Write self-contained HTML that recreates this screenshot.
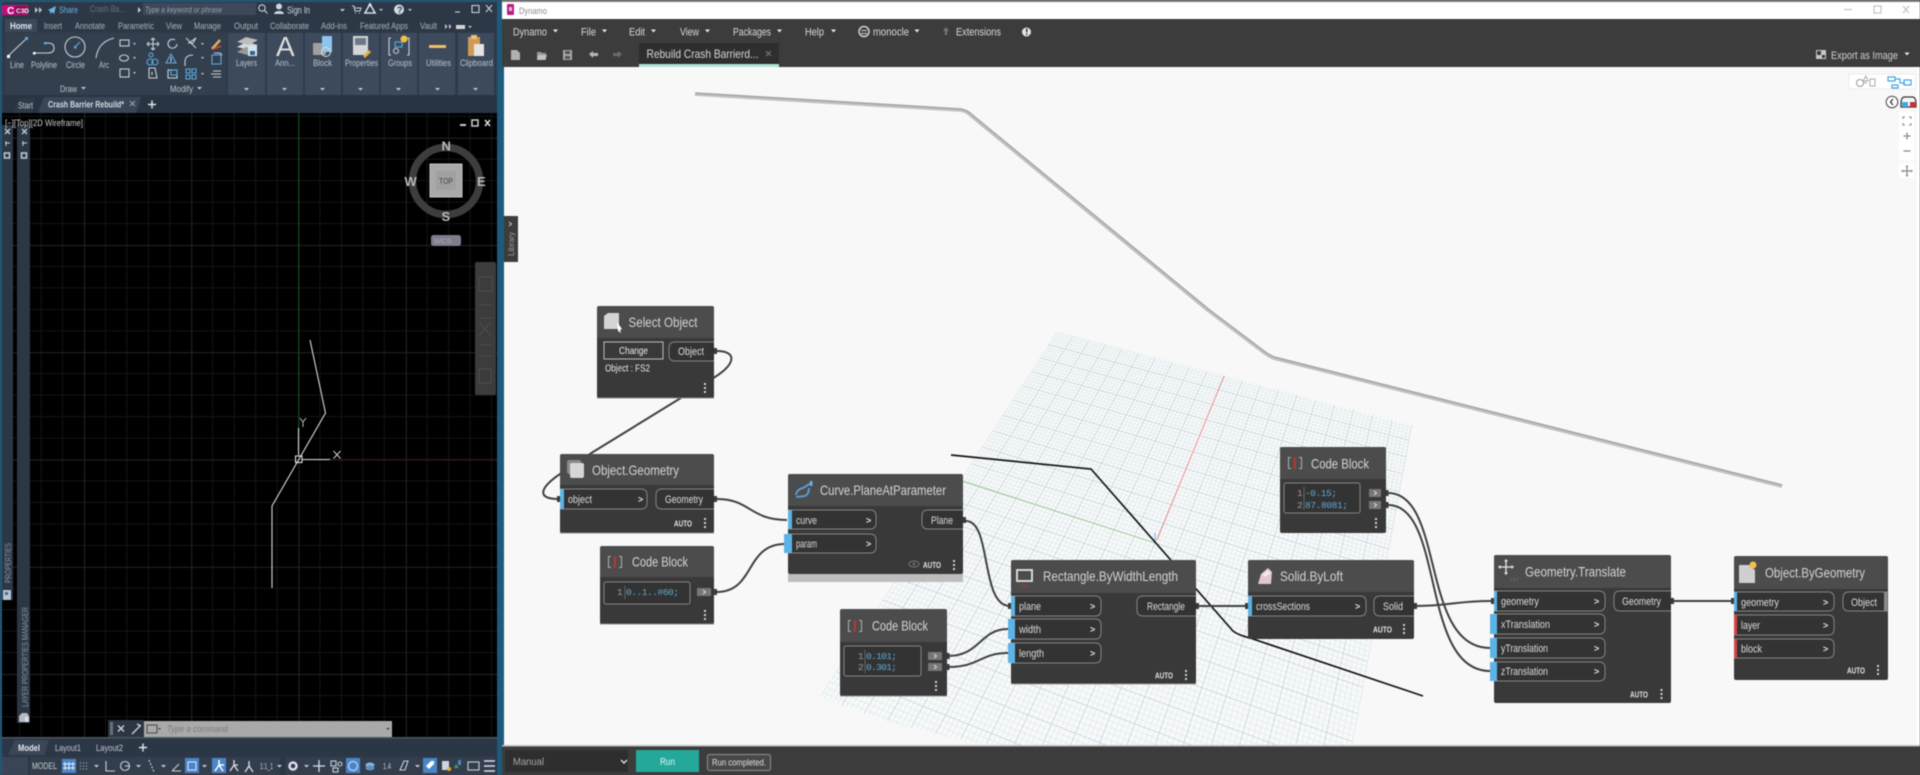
<!DOCTYPE html>
<html><head><meta charset="utf-8"><title>Dynamo</title>
<style>
html,body{margin:0;padding:0;width:1920px;height:775px;overflow:hidden;background:#3c3c3c}
svg{display:block;filter:blur(.5px)}
text{font-family:"Liberation Sans",sans-serif}
.l{fill:#bcc4cd;font-size:9px}
.t{fill:#aab3bd;font-size:9px}
.m{fill:#d8d8d8;font-size:11px}
.h{fill:#d4d4d4;font-size:14px}
.p{fill:#dcdcdc;font-size:11px}
.a{fill:#e4e4e4;font-size:8.5px;font-weight:bold}
.c{font-family:"Liberation Mono",monospace;font-size:9.5px;fill:#5ba9d6}
.n{font-family:"Liberation Mono",monospace;font-size:9.5px;fill:#999}
.g{fill:none;stroke:#404040;stroke-width:2}
.i{fill:none;stroke:#c8cfd7;stroke-width:1.1}
.b{fill:none;stroke:#5aa9e0;stroke-width:1.1}
.pl{fill:#333;stroke:#858585;stroke-width:1}
.chev{fill:#e0e0e0;font-size:9px;font-weight:bold}
.w{fill:#d0d0d0;font-size:8px}
</style></head><body>
<svg xmlns="http://www.w3.org/2000/svg" width="1920" height="775" viewBox="0 0 1920 775">
<defs>
<pattern id="cad" patternUnits="userSpaceOnUse" x="298.5" y="459.5" width="107.25" height="107.25">
<path d="M21.45 0V107.25M42.9 0V107.25M64.35 0V107.25M85.8 0V107.25M0 21.45H107.25M0 42.9H107.25M0 64.35H107.25M0 85.8H107.25" stroke="#141414" stroke-width="1" fill="none"/>
<path d="M.5 0V107.25M0 .5H107.25" stroke="#252525" stroke-width="1" fill="none"/>
</pattern>
<clipPath id="plane"><path d="M1057 332L1412 425L1352 746H997Q900 730 820 697Z"/></clipPath>
<g id="dots"><circle cx="0" cy="-4" r="1.1" fill="#ddd"/><circle cx="0" cy="0" r="1.1" fill="#ddd"/><circle cx="0" cy="4" r="1.1" fill="#ddd"/></g>
<g id="cb"><path d="M3 1.500H.5V12.500H3M11 1.500H13.500V12.500H11" fill="none" stroke="#aaa" stroke-width="1.100"/><rect x="5.500" y="1" width="2.500" height="12" fill="#a83a3a"/></g>
</defs>

<!-- AutoCAD window -->
<rect x="0" y="0" width="504" height="775" fill="#1d5a7c"/>
<rect x="2" y="2" width="495" height="15" fill="#2d3847"/>
<rect x="2" y="17" width="495" height="15" fill="#2d3847"/>
<rect x="2" y="32" width="495" height="63" fill="#2f3a49"/>
<rect x="2" y="95" width="495" height="18" fill="#293443"/>
<rect x="2" y="113" width="495" height="624" fill="#000"/>
<rect x="2" y="113" width="495" height="624" fill="url(#cad)"/>
<!-- title bar -->
<rect x="2" y="5" width="26" height="10" fill="#c20e7c" rx="1"/>
<text x="7" y="14" fill="#fff" font-size="10" font-weight="bold">C</text>
<rect x="15" y="6" width="12" height="8" fill="#8a0a58"/>
<text x="16" y="13" fill="#fff" font-size="6.5" font-weight="bold">C3D</text>
<path d="M35 7l3 3-3 3zM39 7l3 3-3 3z" fill="#c5ccd4"/>
<path d="M48 10l8-4-2 8-2-2-2 2v-3z" fill="#6ab4ea"/>
<text x="59" y="13" fill="#6ab0e0" font-size="9.5" textLength="19" lengthAdjust="spacingAndGlyphs">Share</text>
<text x="90" y="12" fill="#64707e" font-size="9.5" textLength="35" lengthAdjust="spacingAndGlyphs">Crash Ba...</text>
<path d="M138 7l3 3-3 3z" fill="#c5ccd4"/>
<rect x="143" y="3" width="113" height="12" fill="#3d4959"/>
<text x="145" y="12.5" fill="#98a1ab" font-size="8.5" font-style="italic" textLength="77" lengthAdjust="spacingAndGlyphs">Type a keyword or phrase</text>
<circle cx="262" cy="8" r="3.2" class="i"/><path d="M264.5 10.5l3 3" class="i"/>
<circle cx="279" cy="6.5" r="3" fill="#cfd5dc"/><path d="M274 14c0-4 10-4 10 0z" fill="#cfd5dc"/>
<text x="287" y="13.5" fill="#cfd5dc" font-size="10" textLength="23" lengthAdjust="spacingAndGlyphs">Sign In</text>
<path d="M340 9h5l-2.500 2.500z" fill="#c5ccd4"/>
<path d="M352 6h2l1 5h5l1-3h-6M355 13h1M359 13h1" class="i"/>
<path d="M370 4l5 9h-10z" fill="none" stroke="#d5dbe2" stroke-width="1.6"/><circle cx="370" cy="5" r="1.6" fill="#d5dbe2"/>
<path d="M379 9h4l-2 2z" fill="#c5ccd4"/>
<circle cx="399" cy="9.500" r="5" fill="#d5dbe2"/><text x="397" y="13" fill="#2d3847" font-size="9" font-weight="bold">?</text>
<path d="M408 9h4l-2 2z" fill="#c5ccd4"/>
<path d="M455 12h5" class="i" stroke-width="1.600"/><rect x="472" y="5.500" width="7" height="7" class="i"/><path d="M486 5l6 7M492 5l-6 7" class="i" stroke-width="1.500"/>
<!-- ribbon tabs -->
<path d="M5 32V19h32v13z" fill="#3b4859"/>
<text class="t" x="10" y="29" style="fill:#e4e8ed;font-weight:bold" textLength="22" lengthAdjust="spacingAndGlyphs">Home</text>
<text class="t" x="44" y="29" textLength="18" lengthAdjust="spacingAndGlyphs">Insert</text>
<text class="t" x="75" y="29" textLength="30" lengthAdjust="spacingAndGlyphs">Annotate</text>
<text class="t" x="118" y="29" textLength="36" lengthAdjust="spacingAndGlyphs">Parametric</text>
<text class="t" x="166" y="29" textLength="16" lengthAdjust="spacingAndGlyphs">View</text>
<text class="t" x="194" y="29" textLength="27" lengthAdjust="spacingAndGlyphs">Manage</text>
<text class="t" x="234" y="29" textLength="24" lengthAdjust="spacingAndGlyphs">Output</text>
<text class="t" x="270" y="29" textLength="39" lengthAdjust="spacingAndGlyphs">Collaborate</text>
<text class="t" x="321" y="29" textLength="26" lengthAdjust="spacingAndGlyphs">Add-ins</text>
<text class="t" x="360" y="29" textLength="48" lengthAdjust="spacingAndGlyphs">Featured Apps</text>
<text class="t" x="420" y="29" textLength="17" lengthAdjust="spacingAndGlyphs">Vault</text>
<path d="M445 24l2.500 2.500-2.500 2.500zM449 24l2.500 2.500-2.500 2.500z" fill="#c5ccd4"/><rect x="456" y="25" width="9" height="4" fill="#d5d5d5"/><path d="M468 26h4l-2 2z" fill="#c5ccd4"/>
<!-- ribbon panels -->
<rect x="5" y="33" width="221" height="62" fill="#343f4e"/>
<rect x="228" y="33" width="37" height="62" fill="#3d4a5c"/><rect x="267" y="33" width="36" height="62" fill="#3d4a5c"/><rect x="305" y="33" width="36" height="62" fill="#3d4a5c"/><rect x="343" y="33" width="36" height="62" fill="#3d4a5c"/><rect x="381" y="33" width="36" height="62" fill="#3d4a5c"/><rect x="419" y="33" width="36" height="62" fill="#3d4a5c"/><rect x="458" y="33" width="36" height="62" fill="#3d4a5c"/>
<g fill="#c5ccd4"><path d="M244 88h5l-2.500 2.500zM282 88h5l-2.500 2.500zM320 88h5l-2.500 2.500zM358 88h5l-2.500 2.500zM396 88h5l-2.500 2.500zM435 88h5l-2.500 2.500zM473 88h5l-2.500 2.500z"/></g>
<!-- draw -->
<path d="M8 56L26 39" class="i"/><rect x="7" y="55" width="3" height="3" fill="#fff"/><rect x="25" y="37" width="3" height="3" fill="#5aa9e0"/>
<path d="M34 53h14q6 0 6-5t-6-5h-3" class="i"/><rect x="33" y="52" width="2.500" height="2.500" fill="#fff"/><rect x="44" y="42" width="2.500" height="2.500" fill="#5aa9e0"/>
<circle cx="75" cy="47" r="10" class="i"/><path d="M75 47l5-5" class="b"/><rect x="74" y="46" width="2.500" height="2.500" fill="#5aa9e0"/>
<path d="M96 58Q98 42 114 38" class="i"/>
<rect x="120" y="40" width="9" height="6" class="i"/><path d="M133 43h3l-1.500 2z" fill="#c5ccd4"/>
<ellipse cx="124" cy="58" rx="4.500" ry="3" class="i"/><path d="M133 57h3l-1.500 2z" fill="#c5ccd4"/>
<rect x="120" y="69" width="9" height="8" class="i"/><path d="M133 72h3l-1.500 2z" fill="#c5ccd4"/>
<text class="l" x="10" y="68" textLength="14" lengthAdjust="spacingAndGlyphs">Line</text>
<text class="l" x="31" y="68" textLength="26" lengthAdjust="spacingAndGlyphs">Polyline</text>
<text class="l" x="66" y="68" textLength="19" lengthAdjust="spacingAndGlyphs">Circle</text>
<text class="l" x="99" y="68" textLength="10" lengthAdjust="spacingAndGlyphs">Arc</text>
<text class="l" x="60" y="92" textLength="17" lengthAdjust="spacingAndGlyphs">Draw</text><path d="M81 87h5l-2.500 2.500z" fill="#c5ccd4"/>
<text class="l" x="170" y="92" textLength="23" lengthAdjust="spacingAndGlyphs">Modify</text><path d="M197 87h5l-2.500 2.500z" fill="#c5ccd4"/>
<!-- modify -->
<path d="M153 38v12M147 44h12M153 38l-2 2M153 38l2 2M153 50l-2-2M153 50l2-2M147 44l2-2M147 44l2 2M159 44l-2-2M159 44l-2 2" class="i"/>
<path d="M177 44a4.500 4.500 0 1 1-2-4" class="i"/>
<path d="M186 38l10 10M196 38l-3 5-4 0z" class="i"/><path d="M201 43h3l-1.500 2z" fill="#c5ccd4"/>
<path d="M212 49l8-9" stroke="#e0b060" stroke-width="2.500"/><path d="M213 49l8-3" stroke="#d04a4a" stroke-width="1.500"/>
<circle cx="151" cy="55" r="2" class="b"/><circle cx="155" cy="62" r="3" class="b"/><circle cx="150" cy="62" r="3" class="b"/>
<path d="M171 54l-5 9h10z" class="b"/><path d="M171 57v5" class="i"/>
<path d="M185 66v-4q0-7 8-7" class="i"/><path d="M201 57h3l-1.500 2z" fill="#c5ccd4"/>
<rect x="212" y="55" width="9" height="9" class="b"/><path d="M214 53h6l2 2" class="i"/>
<path d="M149 68h6l2 10h-8zM152 72v3" class="i"/>
<rect x="168" y="70" width="9" height="8" class="i"/><rect x="171" y="70" width="6" height="5" class="b"/>
<path d="M186 69h4v4h-4zM192 69h4v4h-4zM186 75h4v4h-4zM192 75h4v4h-4z" class="b"/><path d="M201 73h3l-1.500 2z" fill="#c5ccd4"/>
<path d="M213 71h8M211 74h10M213 77h8" class="i"/>
<!-- big icons -->
<path d="M237 47l9-5 12 3-9 5z" fill="#d8d8d8"/><path d="M237 42l9-5 12 3-9 5z" fill="#bdbdbd"/><path d="M237 52l9-5 8 2-7 6z" fill="#9a9a9a"/><rect x="248" y="46" width="9" height="10" fill="#cfe6f6"/><rect x="250" y="51" width="5" height="4" fill="#3a5f88"/>
<text x="276" y="56" fill="#dcdcdc" font-size="28">A</text>
<rect x="313" y="43" width="13" height="12" fill="#a0a0a0"/><rect x="322" y="36" width="10" height="16" fill="#8fc3f0"/><circle cx="326" cy="52" r="4.500" fill="none" stroke="#ddd"/>
<rect x="353" y="36" width="15" height="19" fill="#d5d5d5"/><rect x="355" y="38" width="11" height="7" fill="#6a7a8a"/><path d="M364 57l6-6" stroke="#e0b040" stroke-width="3"/>
<path d="M391 38h-2v17h2M407 38h2v17h-2" class="i"/><rect x="395" y="42" width="7" height="5" class="b"/><circle cx="396" cy="51" r="2.500" class="i"/><circle cx="404" cy="39" r="3.500" fill="#f0c040"/>
<rect x="429" y="45" width="17" height="3" fill="#f0c060"/>
<rect x="468" y="37" width="12" height="19" fill="#d09a50"/><rect x="471" y="35" width="6" height="4" fill="#e4c080"/><rect x="474" y="44" width="10" height="12" fill="#e4e4e4"/>
<text class="l" x="236" y="66" textLength="21" lengthAdjust="spacingAndGlyphs">Layers</text>
<text class="l" x="275" y="66" textLength="20" lengthAdjust="spacingAndGlyphs">Ann...</text>
<text class="l" x="313" y="66" textLength="19" lengthAdjust="spacingAndGlyphs">Block</text>
<text class="l" x="345" y="66" textLength="33" lengthAdjust="spacingAndGlyphs">Properties</text>
<text class="l" x="388" y="66" textLength="24" lengthAdjust="spacingAndGlyphs">Groups</text>
<text class="l" x="426" y="66" textLength="25" lengthAdjust="spacingAndGlyphs">Utilities</text>
<text class="l" x="460" y="66" textLength="33" lengthAdjust="spacingAndGlyphs">Clipboard</text>
<!-- doc tabs -->
<path d="M14 113l5-15h16l-3 15z" fill="#2f3a49"/>
<text x="18" y="108.500" class="l" textLength="15" lengthAdjust="spacingAndGlyphs">Start</text>
<path d="M38 113l6-16h97l-5 16z" fill="#3a4656"/>
<text x="48" y="107.500" fill="#d5dae0" font-size="9" font-weight="bold" textLength="76" lengthAdjust="spacingAndGlyphs">Crash Barrier Rebuild*</text>
<path d="M130 101l5 5M135 101l-5 5" stroke="#9aa3ad" fill="none"/>
<path d="M148 104.500h8M152 100.500v8" stroke="#e4e4e4" stroke-width="1.400"/>
<!-- palettes -->
<rect x="2" y="125" width="11" height="475" fill="#2c3746"/>
<rect x="17" y="125" width="13" height="598" fill="#2c3746"/>
<path d="M5 129l5 5M10 129l-5 5M22 129l5 5M27 129l-5 5" stroke="#c5ccd4" stroke-width="1.300"/>
<path d="M6 141v5M5 143h5M23 141v5M22 143h5" stroke="#c5ccd4"/><rect x="4.500" y="153" width="5" height="5" fill="none" stroke="#c5ccd4" stroke-width="1.500"/><rect x="21.500" y="153" width="5" height="5" fill="none" stroke="#c5ccd4" stroke-width="1.500"/>
<text transform="translate(11 583) rotate(-90)" fill="#8c96a2" font-size="8.500" textLength="40" lengthAdjust="spacingAndGlyphs">PROPERTIES</text>
<rect x="3" y="590" width="8" height="10" fill="#b8c4d0"/><rect x="5" y="592" width="3" height="3" fill="#3a6ea0"/>
<text transform="translate(28 707) rotate(-90)" fill="#8c96a2" font-size="8.500" textLength="100" lengthAdjust="spacingAndGlyphs">LAYER PROPERTIES MANAGER</text>
<path d="M19 722v-6l3-3h5l2 3v6z" fill="#b8bcc2"/><rect x="25" y="717" width="4" height="5" fill="#dde"/>
<!-- viewport -->
<text x="5" y="126" fill="#c8c8c8" font-size="9" textLength="78" lengthAdjust="spacingAndGlyphs">[−][Top][2D Wireframe]</text>
<path d="M460 125h6" stroke="#ccc" stroke-width="2"/><rect x="472" y="120" width="6" height="6" fill="none" stroke="#ccc" stroke-width="1.500"/><path d="M485 120l5 6M490 120l-5 6" stroke="#ddd" stroke-width="1.500"/>
<path d="M298.500 113V450" stroke="#0d4a14" stroke-width="1"/>
<path d="M330 459.500H497" stroke="#450c12" stroke-width="1"/>
<!-- viewcube -->
<circle cx="446" cy="181" r="33.500" fill="none" stroke="#3d3d3d" stroke-width="7.500"/>
<rect x="430" y="164" width="32" height="33" fill="#a9a9a9" stroke="#c2c2c2"/>
<rect x="436" y="171" width="20" height="19" fill="#a0a0a0"/>
<text x="439" y="184" fill="#444" font-size="8.500" textLength="14" lengthAdjust="spacingAndGlyphs">TOP</text>
<g fill="#b9b9b9" font-size="13" font-weight="bold"><text x="441.500" y="150.500">N</text><text x="441.500" y="221">S</text><text x="404.500" y="186">W</text><text x="477" y="186">E</text></g>
<rect x="431" y="235" width="30" height="11" rx="2.500" fill="#7d7d8d"/>
<text x="434" y="243.500" fill="#a9a9b8" font-size="7.500">WCS</text>
<rect x="475" y="262" width="21" height="133" rx="2" fill="#3c3c3c"/>
<g fill="none" stroke="#4e4e4e"><rect x="479" y="277" width="13" height="14"/><path d="M480 305h11M480 318h11M479 322l12 14M491 322l-12 14M480 345h11M480 356h11"/><rect x="479" y="369" width="12" height="14"/></g>
<!-- geometry in CAD -->
<path d="M310 340L325.500 413L272 506V588" fill="none" stroke="#d8d8d8" stroke-width="1.100"/>
<path d="M298.500 428V455M302 459.500H330" stroke="#d8d8d8" stroke-width="1.100" fill="none"/>
<rect x="295.500" y="456" width="6.500" height="6.500" fill="none" stroke="#eee"/>
<path d="M300 418l3 4 3-4M303 422v5" stroke="#bbb" fill="none"/>
<path d="M333.500 451l7 7.500M340.500 451l-7 7.500" stroke="#ccc"/>
<!-- command line -->
<rect x="108" y="720" width="36" height="17" fill="#2c3544"/>
<rect x="110" y="722" width="3" height="13" fill="#6a6f78"/>
<path d="M118 725.500l6 6M124 725.500l-6 6M132 734l8-8M137 724l4 2" stroke="#cdd2d8" stroke-width="1.400" fill="none"/>
<rect x="144" y="721" width="248" height="16" fill="#a9a9a9"/>
<rect x="147" y="725" width="10" height="8" fill="none" stroke="#4a4a4a"/><path d="M158 728h3l-1.500 2z" fill="#444"/>
<text x="167" y="732" fill="#7b7b7b" font-size="9" font-style="italic" textLength="61" lengthAdjust="spacingAndGlyphs">Type  a  command</text>
<path d="M386 728h4l-2 2z" fill="#444"/>
<!-- model tabs -->
<rect x="2" y="737" width="495" height="20" fill="#2c3746"/>
<rect x="2" y="737" width="495" height="1.500" fill="#4a5564"/>
<path d="M8 755l7-15h34l-5 15z" fill="#3a4656"/>
<text x="18" y="751" fill="#e4e8ed" font-size="9" font-weight="bold" textLength="22" lengthAdjust="spacingAndGlyphs">Model</text>
<text x="55" y="751" class="l" textLength="26" lengthAdjust="spacingAndGlyphs">Layout1</text>
<text x="96" y="751" class="l" textLength="27" lengthAdjust="spacingAndGlyphs">Layout2</text>
<path d="M139 747.500h8M143 743.500v8" stroke="#e4e4e4" stroke-width="1.400"/>
<!-- status -->
<rect x="2" y="757" width="495" height="18" fill="#2b3644"/>
<rect x="2" y="757" width="26" height="18" fill="#394555"/>
<rect x="30" y="757" width="250" height="18" fill="#333e4d"/><rect x="285" y="757" width="210" height="18" fill="#333e4d"/>
<text x="32" y="769" fill="#c8cdd3" font-size="9" textLength="25" lengthAdjust="spacingAndGlyphs">MODEL</text>
<rect x="62" y="759" width="14" height="14" fill="#4a86c7"/><path d="M65 762v8M69 762v8M73 762v8M63 764h12M63 768h12" stroke="#dfeafa"/>
<path d="M80 763h9M80 766h9M80 769h9" stroke="#bcc4cd" stroke-dasharray="1 2"/>
<path d="M94 765h5l-2.500 2.500zM136 765h5l-2.500 2.500zM161 765h5l-2.500 2.500zM202 765h5l-2.500 2.500zM277 765h5l-2.500 2.500zM304 765h5l-2.500 2.500zM415 765h5l-2.500 2.500z" fill="#c5ccd4"/>
<path d="M106 761v10h9" class="i"/>
<circle cx="125" cy="766" r="4.500" class="i"/><path d="M125 766h5" class="i"/>
<path d="M149 760l5 12" class="i" stroke-dasharray="2 1.500"/>
<path d="M172 771h9M172 771l7-7" class="i"/>
<rect x="185" y="758" width="14" height="15" fill="#4a86c7"/><rect x="188" y="762" width="8" height="8" fill="none" stroke="#dfeafa"/>
<rect x="212" y="758" width="14" height="15" fill="#4a86c7"/><path d="M219 760v5l-4 6M219 765l4 6M219 765h5" stroke="#fff" stroke-width="1.500" fill="none"/>
<path d="M234 760v5l-4 6M234 765l4 6M234 765h4" stroke="#dde" stroke-width="1.300" fill="none"/>
<path d="M249 761v5l-4 6M249 766l4 6" stroke="#dde" stroke-width="1.300" fill="none"/>
<text x="260" y="769" fill="#c8cdd3" font-size="8.500" textLength="13" lengthAdjust="spacingAndGlyphs">1:1_1</text>
<circle cx="293" cy="766" r="3.500" fill="none" stroke="#dde" stroke-width="2.500"/>
<path d="M313 766h12M319 760v12" stroke="#dde" stroke-width="1.300"/>
<rect x="331" y="761" width="5" height="5" class="i"/><circle cx="340" cy="764" r="2" class="i"/><rect x="333" y="768" width="5" height="4" class="i"/>
<rect x="346" y="758" width="14" height="15" fill="#4a86c7"/><circle cx="353" cy="766" r="4.500" fill="none" stroke="#dfeafa"/>
<ellipse cx="370" cy="765" rx="4.500" ry="2.500" fill="#7fb6e6"/><ellipse cx="370" cy="768" rx="4.500" ry="2.500" fill="#5f8fc0"/>
<text x="383" y="769" fill="#c8cdd3" font-size="8.500" textLength="8" lengthAdjust="spacingAndGlyphs">1.4</text>
<path d="M400 770l4-9h4l-3 9z" class="i"/>
<rect x="423" y="758" width="14" height="15" fill="#4a86c7"/><path d="M426 766l5-5h3v3l-5 5z" fill="#fff"/>
<rect x="442" y="761" width="7" height="9" fill="#cfd5dc"/><circle cx="449" cy="769" r="2" fill="#e0b040"/><path d="M454 768l2-4 3 4z" fill="#4a9a50"/><rect x="458" y="760" width="3" height="5" fill="#4a86c7"/>
<rect x="468" y="762" width="11" height="8" class="i"/>
<path d="M484 761h11M484 766h11M484 771h11" stroke="#dde" stroke-width="1.400"/>

<!-- Dynamo window -->
<rect x="502" y="0" width="1418" height="2" fill="#7d7d7d"/>
<rect x="502" y="2" width="1418" height="17" fill="#fff"/>
<rect x="507" y="4" width="7" height="11" rx="1" fill="#b81e80"/><rect x="509" y="7" width="3" height="4" fill="#e8b8d8"/>
<text x="519" y="14" fill="#8c8c8c" font-size="9.500" textLength="28" lengthAdjust="spacingAndGlyphs">Dynamo</text>
<path d="M1844 9.500h8" stroke="#bbb"/><rect x="1874" y="6" width="7" height="7" fill="none" stroke="#bbb"/><path d="M1903 6l6 7M1909 6l-6 7" stroke="#bbb" fill="none"/>
<rect x="502" y="19" width="1418" height="48" fill="#3c3c3c"/>
<text class="m" x="513" y="35.500" textLength="34" lengthAdjust="spacingAndGlyphs">Dynamo</text>
<text class="m" x="581" y="35.500" textLength="15" lengthAdjust="spacingAndGlyphs">File</text>
<text class="m" x="629" y="35.500" textLength="16" lengthAdjust="spacingAndGlyphs">Edit</text>
<text class="m" x="680" y="35.500" textLength="19" lengthAdjust="spacingAndGlyphs">View</text>
<text class="m" x="733" y="35.500" textLength="38" lengthAdjust="spacingAndGlyphs">Packages</text>
<text class="m" x="805" y="35.500" textLength="19" lengthAdjust="spacingAndGlyphs">Help</text>
<text class="m" x="873" y="35.500" textLength="36" lengthAdjust="spacingAndGlyphs">monocle</text>
<text class="m" x="956" y="35.500" textLength="45" lengthAdjust="spacingAndGlyphs">Extensions</text>
<path d="M553 29.500h5l-2.500 3zM602 29.500h5l-2.500 3zM651 29.500h5l-2.500 3zM705 29.500h5l-2.500 3zM777 29.500h5l-2.500 3zM831 29.500h5l-2.500 3zM914.500 29.500h5l-2.500 3z" fill="#e8e8e8"/>
<circle cx="864" cy="31.500" r="5" fill="none" stroke="#cfcfcf" stroke-width="1.500"/><path d="M861 30.500h6M861 33.500h6" stroke="#cfcfcf"/>
<path d="M946 27l3 4h-2v4h-2v-4h-2z" fill="#777"/>
<circle cx="1026.500" cy="32" r="4.500" fill="#e4e4e4"/><rect x="1026" y="28.500" width="1.500" height="4" fill="#3c3c3c"/><rect x="1026" y="33.500" width="1.500" height="1.500" fill="#3c3c3c"/>
<!-- toolbar -->
<path d="M511 50h6l3 3v7h-9z" fill="#b0b0b0"/>
<path d="M537 52h4l1 1h4v7h-9z" fill="#9a9a9a"/><path d="M538 55h9l-2 5h-8z" fill="#c0c0c0"/>
<rect x="563" y="50" width="9" height="10" fill="#a8a8a8"/><rect x="565" y="51" width="5" height="3" fill="#555"/><rect x="565" y="56" width="5" height="3" fill="#555"/>
<path d="M589 54l4-3v2h5v3h-5v2z" fill="#b8b8b8"/>
<path d="M622 54l-4-3v2h-5v3h5v2z" fill="#6a6a6a"/>
<rect x="639" y="43" width="140" height="21" fill="#2e2e2e"/>
<rect x="639" y="64" width="140" height="3" fill="#aee4d8"/>
<text x="646.500" y="58" fill="#d8d8d8" font-size="12" textLength="112" lengthAdjust="spacingAndGlyphs">Rebuild Crash Barrierd...</text>
<path d="M766 51l5 5M771 51l-5 5" stroke="#777" stroke-width="1.200"/>
<path d="M1816 50h10v9h-10z" fill="#c8c8c8"/><path d="M1817 51h4v4h-4zM1822 55h3v3h-3z" fill="#3c3c3c"/>
<text x="1831" y="59" fill="#d0d0d0" font-size="11" textLength="67" lengthAdjust="spacingAndGlyphs">Export as Image</text>
<path d="M1904.500 52.500h5l-2.500 3z" fill="#e8e8e8"/>

<!-- canvas -->
<rect x="504" y="67" width="1416" height="679" fill="#f8f8f8"/>
<rect x="1917" y="67" width="3" height="679" fill="#fff"/>
<g clip-path="url(#plane)"><rect x="800" y="320" width="620" height="430" fill="#f7f9fa"/><path id="gm" fill="none" stroke="#dde7ea" stroke-width=".6"/><path id="gM" fill="none" stroke="#c2d0d6" stroke-width=".7"/>
<path d="M963 481L1155 543" stroke="#a7cda0" stroke-width="1" fill="none"/>
<path d="M1224 376L1157 540" stroke="#ef9c9c" stroke-width="1.100" fill="none"/>
<path d="M1155 543V533" stroke="#8fb0e8" stroke-width="1.100" fill="none"/>
</g>
<script>
(function(){var m='',M='';for(var k=0;k<=100;k++){var s='M1579 -472L'+(753+5.89*k).toFixed(1)+' 800M-2039 -475L'+(2853-17.84*k).toFixed(1)+' 800';if(k%5)m+=s;else M+=s}
document.getElementById('gm').setAttribute('d',m);document.getElementById('gM').setAttribute('d',M)})();
</script>
<!-- main curve -->
<path d="M695 94L961 110Q967 111 972 116L1208 310L1265 353Q1269 356 1274 358L1782 486" fill="none" stroke="#a6a6a6" stroke-width="3.600"/>
<path d="M695 94L961 110Q967 111 972 116L1208 310L1265 353Q1269 356 1274 358L1782 486" fill="none" stroke="#c6c6c6" stroke-width="1.500" transform="translate(0 .7)"/>
<!-- black curve -->
<path d="M951 455L1091 469L1233 631Q1238 635 1250 638L1423 696" fill="none" stroke="#151515" stroke-width="1.700"/>
<!-- wires -->
<path class="g" d="M717 351C735 351 738 362 715 377L593 452L560 474C538 489 538 499 558 499"/>
<path class="g" d="M717 499C750 499 750 520 787 520"/>
<path class="g" d="M717 592C755 592 745 544 785 544"/>
<path class="g" d="M966 521C992 521 980 606 1010 606"/>
<path class="g" d="M948 656C980 656 980 629 1008 629"/>
<path class="g" d="M948 667C980 667 980 653 1008 653"/>
<path class="g" d="M1198 606H1246"/>
<path class="g" d="M1416 606C1450 606 1455 601 1491 601"/>
<path class="g" d="M1388 493C1445 493 1420 648 1490 648"/>
<path class="g" d="M1388 505C1445 505 1420 671 1490 671"/>
<path class="g" d="M1673 601H1733"/>
<g fill="#3a3a3a"><rect x="714" y="348" width="3" height="6"/><rect x="714" y="496" width="3" height="6"/><rect x="714" y="589" width="3" height="6"/><rect x="557" y="496" width="3" height="6"/><rect x="963" y="517" width="3" height="6"/><rect x="1008" y="603" width="3" height="6"/><rect x="947" y="653" width="2.500" height="6"/><rect x="947" y="664" width="2.500" height="6"/><rect x="1196" y="603" width="3" height="6"/><rect x="1245" y="603" width="3" height="6"/><rect x="1414" y="603" width="3" height="6"/><rect x="1491" y="598" width="3" height="6"/><rect x="1386" y="490" width="2.500" height="6"/><rect x="1386" y="502" width="2.500" height="6"/><rect x="1671" y="598" width="3" height="6"/><rect x="1731" y="598" width="3" height="6"/></g>

<!-- Select Object -->
<rect x="597" y="306" width="117" height="92" rx="2" fill="#393939"/><path d="M597 338V309q0-3 3-3H711q3 0 3 3V338z" fill="#4c4c4c"/><path d="M597 398H714" stroke="#8a8a8a"/>
<path d="M604 316l4-3h11v16h-15z" fill="#d4d4d4"/><path d="M617 322l5 7-2 1 1 3-3-2z" fill="#fff"/>
<text class="h" x="628.500" y="327" textLength="69" lengthAdjust="spacingAndGlyphs">Select Object</text>
<rect x="604" y="342" width="59" height="17" fill="none" stroke="#bcbcbc"/>
<text x="619" y="354" fill="#ececec" font-size="10.500" textLength="29" lengthAdjust="spacingAndGlyphs">Change</text>
<path class="pl" d="M714 342H675q-6 0-6 6v7q0 6 6 6H714"/>
<text class="p" x="678" y="355" textLength="26" lengthAdjust="spacingAndGlyphs">Object</text>
<text x="605" y="371.500" fill="#e8e8e8" font-size="10.500" textLength="45" lengthAdjust="spacingAndGlyphs">Object : FS2</text>
<use href="#dots" x="705" y="388"/>

<!-- Object.Geometry -->
<rect x="560" y="454" width="154" height="79" rx="2" fill="#393939"/><path d="M560 485V457q0-3 3-3H711q3 0 3 3V485z" fill="#4c4c4c"/><path d="M560 533H714" stroke="#8a8a8a"/>
<rect x="567" y="460" width="14" height="14" rx="2" fill="#8a8a8a"/><rect x="570" y="463" width="14" height="15" rx="2" fill="#d6d6d6"/>
<text class="h" x="592" y="475" textLength="87" lengthAdjust="spacingAndGlyphs">Object.Geometry</text>
<path class="pl" d="M560 489H641q6 0 6 6v8q0 6-6 6H560"/><rect x="560" y="489" width="4" height="20" fill="#5cb4e6"/>
<text class="p" x="568" y="503" textLength="24" lengthAdjust="spacingAndGlyphs">object</text><text class="chev" x="638" y="502.500">&gt;</text>
<path class="pl" d="M714 489H662q-6 0-6 6v8q0 6 6 6H714"/>
<text class="p" x="665" y="503" textLength="38" lengthAdjust="spacingAndGlyphs">Geometry</text>
<text class="a" x="674" y="526.500" textLength="18" lengthAdjust="spacingAndGlyphs">AUTO</text><use href="#dots" x="705" y="523"/>

<!-- Code Block 1 -->
<rect x="600" y="546" width="114" height="78" rx="2" fill="#393939"/><path d="M600 577V549q0-3 3-3H711q3 0 3 3V577z" fill="#4c4c4c"/><path d="M600 624H714" stroke="#8a8a8a"/>
<use href="#cb" x="608" y="555"/>
<text class="h" x="632" y="566.500" textLength="56" lengthAdjust="spacingAndGlyphs">Code Block</text>
<rect x="604" y="582" width="86" height="22" rx="2" fill="#333" stroke="#858585"/>
<text class="n" x="617" y="595">1</text><path d="M625 586v13" stroke="#666"/>
<text class="c" x="626" y="595" textLength="53" lengthAdjust="spacing">0..1..#60;</text>
<rect x="697" y="588" width="14" height="8" fill="#777"/><path d="M703 590l2.500 2-2.500 2" stroke="#ddd" fill="none"/>
<use href="#dots" x="705" y="615"/>

<!-- Curve.PlaneAtParameter -->
<rect x="788" y="574" width="175" height="8" fill="#bdbdbd"/>
<rect x="788" y="474" width="175" height="100" rx="2" fill="#393939"/><path d="M788 506V477q0-3 3-3H960q3 0 3 3V506z" fill="#4c4c4c"/>
<path d="M796 495q1-6 7-7l8-5M796 497l9-1q4-2 4-8" fill="none" stroke="#5a9ad0" stroke-width="2"/><rect x="810" y="481" width="2.500" height="5" fill="#6bb0e0"/>
<text class="h" x="820" y="495" textLength="126" lengthAdjust="spacingAndGlyphs">Curve.PlaneAtParameter</text>
<path class="pl" d="M788 510H870q6 0 6 6v7q0 6-6 6H788"/><rect x="788" y="510" width="4" height="19" fill="#5cb4e6"/>
<text class="p" x="796" y="524" textLength="21" lengthAdjust="spacingAndGlyphs">curve</text><text class="chev" x="866" y="523.500">&gt;</text>
<path class="pl" d="M788 534H870q6 0 6 6v7q0 6-6 6H788"/><rect x="784" y="534" width="8" height="19" fill="#5cb4e6"/>
<text class="p" x="796" y="547.500" textLength="21" lengthAdjust="spacingAndGlyphs">param</text><text class="chev" x="866" y="547">&gt;</text>
<path class="pl" d="M963 510H928q-6 0-6 6v7q0 6 6 6H963"/>
<text class="p" x="931" y="524" textLength="22" lengthAdjust="spacingAndGlyphs">Plane</text>
<ellipse cx="914" cy="564" rx="5" ry="3" fill="none" stroke="#777"/><circle cx="914" cy="564" r="1.500" fill="#666"/>
<text class="a" x="923" y="568" textLength="18" lengthAdjust="spacingAndGlyphs">AUTO</text><use href="#dots" x="954" y="565"/>

<!-- Code Block 2 -->
<rect x="840" y="609" width="107" height="87" rx="2" fill="#393939"/><path d="M840 642V612q0-3 3-3H944q3 0 3 3V642z" fill="#4c4c4c"/><path d="M840 696H947" stroke="#8a8a8a"/>
<use href="#cb" x="848" y="619"/>
<text class="h" x="872" y="630.500" textLength="56" lengthAdjust="spacingAndGlyphs">Code Block</text>
<rect x="844" y="646" width="77" height="30" rx="2" fill="#333" stroke="#858585"/>
<text class="n" x="858" y="659">1</text><text class="n" x="858" y="670">2</text><path d="M865 650v23" stroke="#666"/>
<text class="c" x="866" y="659" textLength="31" lengthAdjust="spacing">0.101;</text><text class="c" x="866" y="670" textLength="31" lengthAdjust="spacing">0.301;</text>
<rect x="928" y="652" width="14" height="8" fill="#777"/><rect x="928" y="663" width="14" height="8" fill="#777"/><path d="M934 654l2.500 2-2.500 2M934 665l2.500 2-2.500 2" stroke="#ddd" fill="none"/>
<use href="#dots" x="936" y="686"/>

<!-- Rectangle -->
<rect x="1011" y="560" width="185" height="124" rx="2" fill="#393939"/><path d="M1011 593V563q0-3 3-3H1193q3 0 3 3V593z" fill="#4c4c4c"/><path d="M1011 684H1196" stroke="#a0a0a0"/>
<rect x="1017" y="570" width="15" height="11" fill="none" stroke="#e4e4e4" stroke-width="1.800"/><path d="M1021 586h7" stroke="#a03a3a" stroke-width="1.500"/>
<text class="h" x="1043" y="581" textLength="135" lengthAdjust="spacingAndGlyphs">Rectangle.ByWidthLength</text>
<path class="pl" d="M1011 596H1095q6 0 6 6v8q0 6-6 6H1011"/><rect x="1011" y="596" width="4" height="20" fill="#5cb4e6"/>
<text class="p" x="1019" y="610" textLength="22" lengthAdjust="spacingAndGlyphs">plane</text><text class="chev" x="1090" y="609.500">&gt;</text>
<path class="pl" d="M1011 619H1095q6 0 6 6v8q0 6-6 6H1011"/><rect x="1008" y="619" width="7" height="20" fill="#5cb4e6"/>
<text class="p" x="1019" y="633" textLength="22" lengthAdjust="spacingAndGlyphs">width</text><text class="chev" x="1090" y="632.500">&gt;</text>
<path class="pl" d="M1011 643H1095q6 0 6 6v8q0 6-6 6H1011"/><rect x="1008" y="643" width="7" height="20" fill="#5cb4e6"/>
<text class="p" x="1019" y="657" textLength="25" lengthAdjust="spacingAndGlyphs">length</text><text class="chev" x="1090" y="656.500">&gt;</text>
<path class="pl" d="M1196 596H1143q-6 0-6 6v8q0 6 6 6H1196"/>
<text class="p" x="1147" y="610" textLength="38" lengthAdjust="spacingAndGlyphs">Rectangle</text>
<text class="a" x="1155" y="678.500" textLength="18" lengthAdjust="spacingAndGlyphs">AUTO</text><use href="#dots" x="1186" y="675"/>

<!-- Solid.ByLoft -->
<rect x="1248" y="560" width="166" height="79" rx="2" fill="#393939"/><path d="M1248 592V563q0-3 3-3H1411q3 0 3 3V592z" fill="#4c4c4c"/>
<path d="M1258 584l3-10 7-6 4 4-1 12z" fill="#e2c8cc"/><path d="M1262 575l6-5 3 3-6 4z" fill="#f4e8ea"/>
<text class="h" x="1280" y="581" textLength="63" lengthAdjust="spacingAndGlyphs">Solid.ByLoft</text>
<path class="pl" d="M1248 596H1360q6 0 6 6v8q0 6-6 6H1248"/><rect x="1248" y="596" width="4" height="20" fill="#5cb4e6"/>
<text class="p" x="1256" y="610" textLength="54" lengthAdjust="spacingAndGlyphs">crossSections</text><text class="chev" x="1355" y="609.500">&gt;</text>
<path class="pl" d="M1414 596H1380q-6 0-6 6v8q0 6 6 6H1414"/>
<text class="p" x="1383" y="610" textLength="20" lengthAdjust="spacingAndGlyphs">Solid</text>
<text class="a" x="1373" y="632.500" textLength="19" lengthAdjust="spacingAndGlyphs">AUTO</text><use href="#dots" x="1404" y="629"/>

<!-- Code Block 3 -->
<rect x="1280" y="447" width="106" height="86" rx="2" fill="#393939"/><path d="M1280 479V450q0-3 3-3H1383q3 0 3 3V479z" fill="#4c4c4c"/>
<use href="#cb" x="1288" y="456"/>
<text class="h" x="1311" y="468.500" textLength="58" lengthAdjust="spacingAndGlyphs">Code Block</text>
<rect x="1284" y="483" width="76" height="30" rx="2" fill="#333" stroke="#858585"/>
<text class="n" x="1297" y="496">1</text><text class="n" x="1297" y="508">2</text><path d="M1304 487v23" stroke="#666"/>
<text class="c" x="1305" y="496" textLength="32" lengthAdjust="spacing">-0.15;</text><text class="c" x="1305" y="508" textLength="43" lengthAdjust="spacing">87.8081;</text>
<rect x="1369" y="489" width="12" height="8" fill="#777"/><rect x="1369" y="501" width="12" height="8" fill="#777"/><path d="M1374 491l2.500 2-2.500 2M1374 503l2.500 2-2.500 2" stroke="#ddd" fill="none"/>
<use href="#dots" x="1376" y="523"/>

<!-- Geometry.Translate -->
<rect x="1494" y="555" width="177" height="148" rx="2" fill="#393939"/><path d="M1494 588V558q0-3 3-3H1668q3 0 3 3V588z" fill="#4c4c4c"/>
<path d="M1506 561v12M1500 567h12" stroke="#e8e8e8" stroke-width="1.300"/><path d="M1506 559l-2 2.500h4zM1506 575l-2-2.500h4zM1498 567l2.500-2v4zM1514 567l-2.500-2v4z" fill="#e8e8e8"/><text x="1510" y="581" fill="#6a6a6a" font-size="6">xyz</text>
<text class="h" x="1525" y="576.500" textLength="101" lengthAdjust="spacingAndGlyphs">Geometry.Translate</text>
<path class="pl" d="M1494 591H1599q6 0 6 6v8q0 6-6 6H1494"/><rect x="1494" y="591" width="3" height="20" fill="#5cb4e6"/>
<text class="p" x="1501" y="605" textLength="38" lengthAdjust="spacingAndGlyphs">geometry</text><text class="chev" x="1594" y="604.500">&gt;</text>
<path class="pl" d="M1494 614H1599q6 0 6 6v8q0 6-6 6H1494"/><rect x="1490" y="614" width="7" height="20" fill="#5cb4e6"/>
<text class="p" x="1501" y="628" textLength="49" lengthAdjust="spacingAndGlyphs">xTranslation</text><text class="chev" x="1594" y="627.500">&gt;</text>
<path class="pl" d="M1494 638H1599q6 0 6 6v8q0 6-6 6H1494"/><rect x="1490" y="638" width="7" height="20" fill="#5cb4e6"/>
<text class="p" x="1501" y="652" textLength="47" lengthAdjust="spacingAndGlyphs">yTranslation</text><text class="chev" x="1594" y="651.500">&gt;</text>
<path class="pl" d="M1494 662H1599q6 0 6 6v7q0 6-6 6H1494"/><rect x="1490" y="662" width="7" height="19" fill="#5cb4e6"/>
<text class="p" x="1501" y="675" textLength="47" lengthAdjust="spacingAndGlyphs">zTranslation</text><text class="chev" x="1594" y="674.500">&gt;</text>
<path class="pl" d="M1671 591H1620q-6 0-6 6v8q0 6 6 6H1671"/>
<text class="p" x="1622" y="605" textLength="39" lengthAdjust="spacingAndGlyphs">Geometry</text>
<text class="a" x="1630" y="697.500" textLength="18" lengthAdjust="spacingAndGlyphs">AUTO</text><use href="#dots" x="1661.500" y="694"/>

<!-- Object.ByGeometry -->
<rect x="1734" y="556" width="154" height="124" rx="2" fill="#393939"/><path d="M1734 589V559q0-3 3-3H1885q3 0 3 3V589z" fill="#4c4c4c"/>
<path d="M1739 565h10l6 5v13h-16z" fill="#cfcfcf"/><circle cx="1753" cy="565" r="3.500" fill="#f0c048"/>
<text class="h" x="1765" y="577.500" textLength="100" lengthAdjust="spacingAndGlyphs">Object.ByGeometry</text>
<path class="pl" d="M1734 592H1828q6 0 6 6v7q0 6-6 6H1734"/><rect x="1734" y="592" width="3" height="19" fill="#5cb4e6"/>
<text class="p" x="1741" y="606" textLength="38" lengthAdjust="spacingAndGlyphs">geometry</text><text class="chev" x="1823" y="605.500">&gt;</text>
<path class="pl" d="M1734 615H1828q6 0 6 6v8q0 6-6 6H1734"/><rect x="1734" y="615" width="3" height="20" fill="#d64545"/>
<text class="p" x="1741" y="629" textLength="19" lengthAdjust="spacingAndGlyphs">layer</text><text class="chev" x="1823" y="628.500">&gt;</text>
<path class="pl" d="M1734 639H1828q6 0 6 6v7q0 6-6 6H1734"/><rect x="1734" y="639" width="3" height="19" fill="#d64545"/>
<text class="p" x="1741" y="652.500" textLength="21" lengthAdjust="spacingAndGlyphs">block</text><text class="chev" x="1823" y="652">&gt;</text>
<path class="pl" d="M1888 592H1849q-6 0-6 6v7q0 6 6 6H1888"/><rect x="1884" y="592" width="3.500" height="19" fill="#8a8a8a"/>
<text class="p" x="1851" y="606" textLength="26" lengthAdjust="spacingAndGlyphs">Object</text>
<text class="a" x="1847" y="673.500" textLength="18" lengthAdjust="spacingAndGlyphs">AUTO</text><use href="#dots" x="1878" y="670"/>

<!-- Library tab -->
<rect x="504" y="216" width="14" height="46" fill="#3c3c3c"/>
<text transform="translate(514 256) rotate(-90)" fill="#9a9a9a" font-size="8.500" textLength="24" lengthAdjust="spacingAndGlyphs">Library</text>
<path d="M509 222l2.500 2-2.500 2" stroke="#ccc" fill="none"/>

<!-- canvas controls -->
<rect x="1849" y="74" width="67" height="15" fill="#fff" stroke="#ececec"/>
<circle cx="1860" cy="83" r="3.500" fill="none" stroke="#999"/><path d="M1864 83h3M1866 76l-3 5h5zM1870 79h5v7h-5z" fill="none" stroke="#aaa"/>
<path d="M1888 77h7v4h-7zM1904 80h7v5h-7zM1892 85h6v3h-6zM1895 79h5v4h5" fill="none" stroke="#42a5e8" stroke-width="1.200"/>
<circle cx="1892" cy="102" r="5.800" fill="#fff" stroke="#444"/><path d="M1893 99l-2.500 3 2.500 3" stroke="#333" fill="none" stroke-width="1.300"/>
<path d="M1901 107v-4q0-5 3-6h9q3 1 3 6v4z" fill="none" stroke="#333" stroke-width="1.200"/><rect x="1902" y="102" width="6" height="5" fill="#3da8e0"/><rect x="1910" y="102" width="6" height="5" fill="#c8303a"/>
<rect x="1899" y="112" width="15" height="48" fill="#fff"/><rect x="1899" y="163" width="15" height="15" fill="#fff"/>
<path d="M1903 119v-2h2M1911 119v-2h-2M1903 123v2h2M1911 123v2h-2" stroke="#888" fill="none"/>
<path d="M1903.500 136h7M1907 132.500v7M1903.500 151h7" stroke="#888" stroke-width="1.200"/>
<path d="M1907 166v10M1902 171h10" stroke="#888" stroke-width="1.200"/><path d="M1907 165l-1.500 2h3zM1907 177l-1.500-2h3zM1901 171l2-1.500v3zM1913 171l-2-1.500v3z" fill="#888"/>

<!-- bottom bar -->
<rect x="502" y="746" width="1418" height="29" fill="#3c3c3c"/>
<rect x="502" y="745" width="1418" height="1.500" fill="#bdbdbd"/>
<rect x="505" y="750" width="123" height="22" fill="#2e2e2e"/>
<text x="513" y="765" fill="#a8a8a8" font-size="10.500" textLength="31" lengthAdjust="spacingAndGlyphs">Manual</text>
<path d="M621 760l3 3 3-3" stroke="#ddd" stroke-width="1.400" fill="none"/>
<rect x="636" y="750" width="63" height="22" fill="#23a899"/>
<text x="660" y="765" fill="#e8f6f4" font-size="10.500" textLength="15" lengthAdjust="spacingAndGlyphs">Run</text>
<rect x="707.500" y="754.500" width="63" height="16" rx="2" fill="#484848" stroke="#909090"/>
<text x="712" y="765.500" fill="#e0e0e0" font-size="9" textLength="54" lengthAdjust="spacingAndGlyphs">Run completed.</text>
</svg>
</body></html>
